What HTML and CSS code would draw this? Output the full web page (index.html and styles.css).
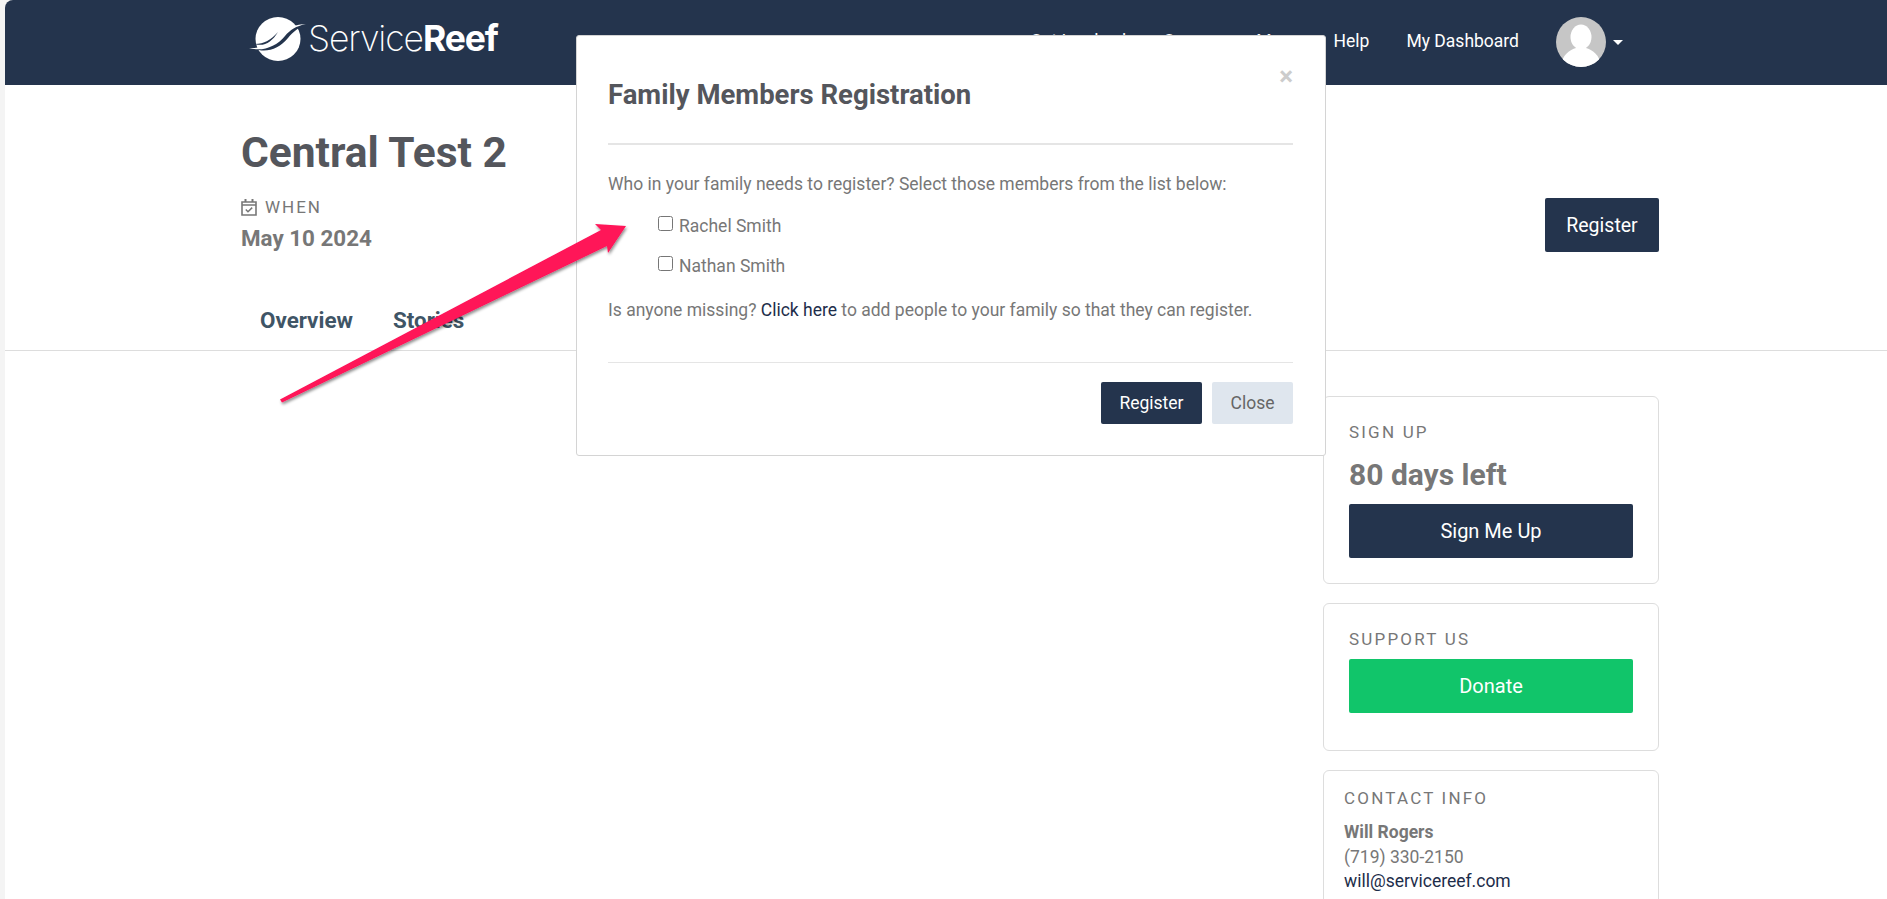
FILE: index.html
```html
<!DOCTYPE html>
<html lang="en">
<head>
<meta charset="utf-8">
<title>Central Test 2</title>
<link rel="stylesheet" href="styles.css">
</head>
<body>
<div class="page">
  <header class="nav">
    <a class="logo">
      <svg class="logo-mark" viewBox="0 0 58 44" width="58" height="44" aria-hidden="true">
        <ellipse cx="29" cy="22" rx="22.5" ry="22" fill="#fff"/>
        <path d="M4 31 C16 33 27 27 35 18 C40 12 47 8 57 7 C49 11 44 15 39 21 C30 32 16 37 4 31 Z" fill="#24344d"/>
        <path d="M0 31 C14 32 26 26 34 17 C39 11 47 7 57 7 C47 9 41 13 36 19 C27 30 13 35 0 31 Z" fill="#fff"/>
        <path d="M6 27 C15 27 22 23 29 15 C23 25 15 30 6 27 Z" fill="#24344d"/>
      </svg>
      <span class="logo-text">Service<b>Reef</b></span>
    </a>
    <nav class="nav-links">
      <a class="nav-link">Get Involved</a>
      <a class="nav-link">Groups</a>
      <a class="nav-link">More</a>
      <a class="nav-link">Help</a>
      <a class="nav-link">My Dashboard</a>
    </nav>
    <div class="account">
      <svg class="avatar" viewBox="0 0 50 50" width="50" height="50" aria-hidden="true">
        <defs><clipPath id="av"><circle cx="25" cy="25" r="25"/></clipPath></defs>
        <circle cx="25" cy="25" r="25" fill="#c6c6c6"/>
        <g clip-path="url(#av)" fill="#fff">
          <ellipse cx="25" cy="20" rx="10.5" ry="12.5"/>
          <path d="M5 50 C6 37 14 33 20 31 L30 31 C36 33 44 37 45 50 Z"/>
        </g>
      </svg>
      <span class="caret"></span>
    </div>
  </header>

  <section class="hero">
    <div class="hero-info">
      <h1 class="title">Central Test 2</h1>
      <div class="when">
        <svg class="when-icon" viewBox="0 0 16 18" width="16" height="18" aria-hidden="true">
          <path d="M1 4 H15 V17 H1 Z M1 7 H15" fill="none" stroke="#777" stroke-width="1.6"/>
          <path d="M4.5 1 V4 M11.5 1 V4" stroke="#777" stroke-width="2" fill="none"/>
          <path d="M4.8 11.5 L7 13.8 L11.2 9.6" fill="none" stroke="#777" stroke-width="1.5"/>
        </svg>
        <span>WHEN</span>
      </div>
      <div class="date">May 10 2024</div>
    </div>
    <a class="btn btn-navy btn-hero">Register</a>
  </section>

  <div class="tabs">
    <a class="tab">Overview</a>
    <a class="tab">Stories</a>
  </div>

  <div class="content">
    <aside class="sidebar">
      <div class="card card-sign">
        <div class="eyebrow">SIGN UP</div>
        <div class="days">80 days left</div>
        <a class="btn btn-navy btn-wide">Sign Me Up</a>
      </div>
      <div class="card card-support">
        <div class="eyebrow">SUPPORT US</div>
        <a class="btn btn-green btn-wide">Donate</a>
      </div>
      <div class="card card-contact">
        <div class="eyebrow">CONTACT INFO</div>
        <div class="contact-name">Will Rogers</div>
        <div class="contact-line">(719) 330-2150</div>
        <a class="contact-line contact-mail">will@servicereef.com</a>
      </div>
    </aside>
  </div>
</div>

<div class="modal">
  <button class="modal-x" type="button">×</button>
  <h2 class="modal-title">Family Members Registration</h2>
  <p class="modal-lead">Who in your family needs to register? Select those members from the list below:</p>
  <label class="member member-first"><input type="checkbox"> Rachel Smith</label>
  <label class="member"><input type="checkbox"> Nathan Smith</label>
  <p class="modal-missing">Is anyone missing? <a class="link">Click here</a> to add people to your family so that they can register.</p>
  <div class="modal-foot">
    <a class="btn btn-navy btn-small">Register</a>
    <a class="btn btn-light btn-small">Close</a>
  </div>
</div>

<svg class="arrow" viewBox="0 0 1887 899" width="1887" height="899" aria-hidden="true">
  <defs>
    <filter id="arrow-shadow" x="-10%" y="-10%" width="120%" height="130%">
      <feDropShadow dx="1" dy="2" stdDeviation="1.5" flood-color="#000" flood-opacity="0.45"/>
    </filter>
  </defs>
  <polygon points="280,399.5 601,230 595,224 626,226 608,253 607,246 282,402.5" fill="#ff1258" filter="url(#arrow-shadow)"/>
</svg>
</body>
</html>
```
FILE: styles.css
```css
* { box-sizing: border-box; }
html, body { margin: 0; height: 100%; overflow: hidden; }
body {
  background: #f4f4f4;
  font-family: Roboto, "Liberation Sans", sans-serif;
  color: #777;
  position: relative;
}
a { text-decoration: none; color: inherit; }

.page {
  margin-left: 5px;
  height: 899px;
  background: #fff;
  border-top-left-radius: 8px;
  overflow: hidden;
}

/* Nav */
.nav {
  height: 85px;
  background: #24344d;
  display: flex;
  align-items: center;
  padding-left: 244px;
}
.logo { display: flex; align-items: center; height: 44px; margin-top: -8px; }
.logo-mark { display: block; flex: none; }
.logo-text {
  margin-left: 1px;
  margin-top: -1px;
  font-family: Inter, Roboto, sans-serif;
  font-weight: 200;
  font-size: 35.5px;
  letter-spacing: -1.1px;
  color: #fff;
}
.logo-text b { font-weight: 700; }
.nav-links {
  margin-left: auto;
  display: flex;
  align-items: center;
  height: 85px;
  padding-bottom: 4px;
}
.nav-link { color: #fff; font-size: 17.5px; white-space: nowrap; }
.nav-link + .nav-link { margin-left: 37px; }
.account { display: flex; align-items: center; margin-left: 37px; margin-right: 264px; margin-top: -1px; }
.avatar { display: block; }
.caret {
  margin-left: 7px;
  margin-top: 1px;
  border-left: 5px solid transparent;
  border-right: 5px solid transparent;
  border-top: 5px solid #fff;
}

/* Hero */
.hero {
  height: 180px;
  display: flex;
  justify-content: space-between;
  padding: 42px 228px 0 236px;
}
.title {
  margin: 0;
  font-size: 42.5px;
  line-height: 52px;
  font-weight: 700;
  color: #54565c;
}
.when {
  display: flex;
  align-items: center;
  margin-top: 18px;
  height: 20px;
  font-size: 17px;
  letter-spacing: 2px;
  color: #777;
}
.when-icon { margin-right: 8px; }
.date {
  margin-top: 7px;
  font-size: 22.4px;
  line-height: 28px;
  font-weight: 700;
  color: #777;
}
.btn {
  display: flex;
  align-items: center;
  justify-content: center;
  border-radius: 2px;
  white-space: nowrap;
}
.btn-navy { background: #24344d; color: #fff; }
.btn-green { background: #11c56a; color: #fff; }
.btn-light { background: #dfe6ee; color: #666; }
.btn-hero { width: 114px; height: 54px; margin-top: 71px; font-size: 19.5px; }
.btn-wide { height: 54px; font-size: 20px; }
.btn-small { height: 42px; font-size: 17.5px; }

/* Tabs */
.tabs {
  height: 86px;
  border-bottom: 1px solid #ddd;
  display: flex;
  gap: 40px;
  padding: 42px 0 0 255px;
  font-size: 22.4px;
  font-weight: 700;
  color: #3f5566;
}

/* Sidebar */
.content { display: flex; justify-content: flex-end; padding: 45px 228px 0 0; }
.sidebar { width: 336px; display: flex; flex-direction: column; gap: 19px; }
.card { border: 1px solid #ddd; border-radius: 6px; padding: 25px 25px 0; }
.card-sign { height: 188px; }
.card-support { height: 148px; }
.card-contact { height: 240px; padding: 17px 20px 0; }
.eyebrow { font-size: 17px; line-height: 20px; letter-spacing: 2.2px; color: #777; }
.days { margin-top: 12px; font-size: 30px; line-height: 42px; font-weight: 700; color: #777; margin-bottom: 8px; }
.card-support .eyebrow { margin-bottom: 10px; }
.contact-name { margin-top: 12px; font-size: 17.5px; line-height: 25px; font-weight: 700; color: #777; }
.contact-line { display: block; font-size: 17.5px; line-height: 24px; color: #777; }
.contact-mail { color: #1d2d4a; }

/* Modal */
.modal {
  position: absolute;
  left: 576px;
  top: 35px;
  width: 750px;
  height: 421px;
  background: #fff;
  border: 1px solid #d4d4d4;
  border-radius: 3px;
  padding: 0 32px 0 31px;
  color: #777;
}
.modal-x {
  position: absolute;
  right: 32px;
  top: 25px;
  padding: 0;
  border: 0;
  background: none;
  font-family: Roboto, sans-serif;
  font-size: 26px;
  line-height: 30px;
  font-weight: 700;
  color: #ccc;
}
.modal-title {
  margin: 0;
  padding-top: 42px;
  height: 109px;
  border-bottom: 2px solid #e5e5e5;
  font-size: 27.5px;
  line-height: 34px;
  font-weight: 700;
  color: #54565c;
}
.modal-lead { margin: 27px 0 0; font-size: 17.5px; line-height: 24px; }
.member {
  display: flex;
  align-items: center;
  gap: 6px;
  margin: 17px 0 0 50px;
  height: 23px;
  font-size: 17.5px;
  line-height: 23px;
}
.member-first { margin-top: 19px; }
.member input { margin: -6px 0 0; width: 15px; height: 15px; }
.modal-missing { margin: 20px 0 0; font-size: 17.5px; line-height: 24px; }
.link { color: #1d2d4a; }
.modal-foot {
  margin-top: 40px;
  border-top: 1px solid #e5e5e5;
  padding-top: 19px;
  display: flex;
  justify-content: flex-end;
  gap: 10px;
}
.modal-foot .btn-navy { width: 101px; }
.modal-foot .btn-light { width: 81px; }

/* Annotation arrow */
.arrow { position: absolute; left: 0; top: 0; pointer-events: none; }
```
